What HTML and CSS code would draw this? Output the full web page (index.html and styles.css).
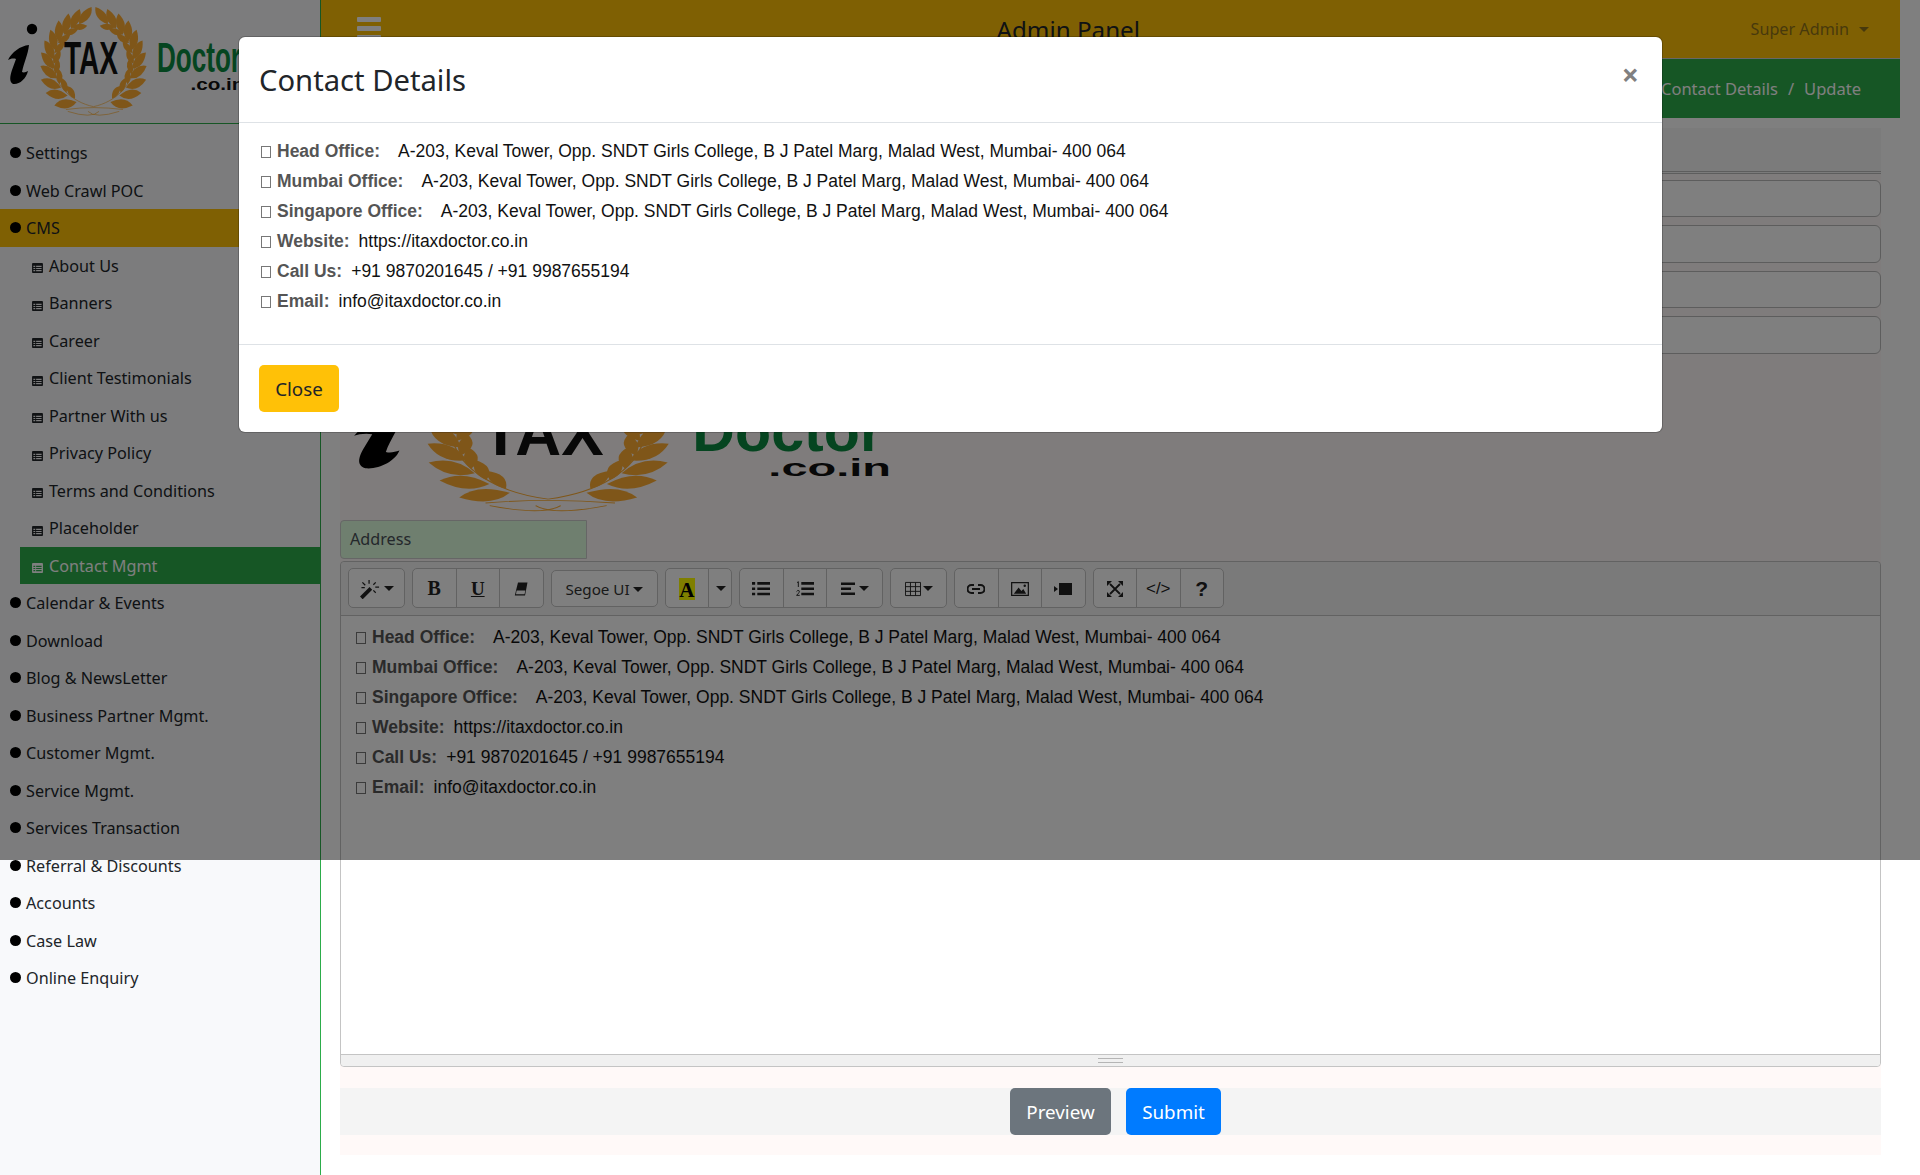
FILE: index.html
```html
<!DOCTYPE html>
<html lang="en">
<head>
<meta charset="utf-8">
<title>Admin Panel</title>
<link rel="stylesheet" href="styles.css">
</head>
<body>
<svg class="defs" width="0" height="0" aria-hidden="true">
  <defs>
    <path id="lf-o" d="M7 -42 Q6 -55 -10 -57 Q-9 -44 7 -42Z"/>
    <path id="lf-i" d="M8 -43 Q-1 -46 -8 -38 Q2 -33 8 -43Z"/>
    <g id="half">
      <use href="#lf-o" transform="rotate(12)"/>
      <use href="#lf-o" transform="rotate(25)"/>
      <use href="#lf-o" transform="rotate(38)"/>
      <use href="#lf-o" transform="rotate(51)"/>
      <use href="#lf-o" transform="rotate(64)"/>
      <use href="#lf-o" transform="rotate(77)"/>
      <use href="#lf-o" transform="rotate(90)"/>
      <use href="#lf-o" transform="rotate(104)"/>
      <use href="#lf-o" transform="rotate(118) scale(1.04)"/>
      <use href="#lf-o" transform="rotate(132) scale(1.06)"/>
      <use href="#lf-o" transform="rotate(147) scale(1.08)"/>
      <use href="#lf-i" transform="rotate(22)"/>
      <use href="#lf-i" transform="rotate(37)"/>
      <use href="#lf-i" transform="rotate(52)"/>
      <use href="#lf-i" transform="rotate(67)"/>
      <use href="#lf-i" transform="rotate(82)"/>
      <use href="#lf-i" transform="rotate(97)"/>
      <use href="#lf-i" transform="rotate(112)"/>
      <use href="#lf-i" transform="rotate(127)"/>
      <use href="#lf-i" transform="rotate(142)"/>
      <path class="stem" d="M0 47 C24 42 42 25 46 0 C46 -15 36 -34 14 -44" />
    </g>
    <g id="logo">
      <circle cx="32" cy="29" r="5.200"/>
      <path d="M8 60 C12 52 20 46 29 45 C28 55 24 62 22 72 C24 73 26 72 28 71 C26 79 19 85 13 84 C9 82 10 76 12 70 L16 59 C13 58 10 59 8 60Z"/>
      <g class="wreath" transform="translate(93.500 62) scale(.92 .95)">
        <use href="#half"/>
        <use href="#half" transform="scale(-1 1)"/>
        <path class="stem" d="M-30 50 Q0 46 32 50 M-28 52 Q-2 60 6 52 M28 52 Q2 60 -6 52"/>
      </g>
      <text class="lg-tax" x="64" y="74" textLength="54" lengthAdjust="spacingAndGlyphs">TAX</text>
      <text class="lg-doc" x="157" y="71.500" textLength="84" lengthAdjust="spacingAndGlyphs">Doctor</text>
      <text class="lg-co" x="190.500" y="90" textLength="54" lengthAdjust="spacingAndGlyphs">.co.in</text>
    </g>
    <symbol id="ico-list" viewBox="0 0 12 11"><path fill="currentColor" fill-rule="evenodd" d="M0 1.200C0 .5.5 0 1.200 0h9.600C11.500 0 12 .5 12 1.200v8.600c0 .7-.5 1.200-1.200 1.200H1.200C.5 11 0 10.500 0 9.800ZM1.500 3v1.400h2V3Zm3 0v1.400h6V3Zm-3 2.400v1.300h2V5.400Zm3 0v1.300h6V5.400Zm-3 2.300v1.500h2V7.700Zm3 0v1.500h6V7.700Z"/></symbol>
  </defs>
</svg>

<div class="app">
  <aside class="sidebar">
    <div class="side-logo">
      <svg class="logo-small" viewBox="0 0 250 122" role="img" aria-label="iTax Doctor"><use href="#logo"/></svg>
    </div>
    <nav class="menu">
      <a class="item"><i class="dot"></i><span class="lbl">Settings</span></a>
      <a class="item"><i class="dot"></i><span class="lbl">Web Crawl POC</span></a>
      <a class="item item-open"><i class="dot"></i><span class="lbl">CMS</span></a>
      <a class="sub"><svg class="sub-ico"><use href="#ico-list"/></svg><span class="lbl">About Us</span></a>
      <a class="sub"><svg class="sub-ico"><use href="#ico-list"/></svg><span class="lbl">Banners</span></a>
      <a class="sub"><svg class="sub-ico"><use href="#ico-list"/></svg><span class="lbl">Career</span></a>
      <a class="sub"><svg class="sub-ico"><use href="#ico-list"/></svg><span class="lbl">Client Testimonials</span></a>
      <a class="sub"><svg class="sub-ico"><use href="#ico-list"/></svg><span class="lbl">Partner With us</span></a>
      <a class="sub"><svg class="sub-ico"><use href="#ico-list"/></svg><span class="lbl">Privacy Policy</span></a>
      <a class="sub"><svg class="sub-ico"><use href="#ico-list"/></svg><span class="lbl">Terms and Conditions</span></a>
      <a class="sub"><svg class="sub-ico"><use href="#ico-list"/></svg><span class="lbl">Placeholder</span></a>
      <a class="sub sub-active"><svg class="sub-ico"><use href="#ico-list"/></svg><span class="lbl">Contact Mgmt</span></a>
      <a class="item"><i class="dot"></i><span class="lbl">Calendar &amp; Events</span></a>
      <a class="item"><i class="dot"></i><span class="lbl">Download</span></a>
      <a class="item"><i class="dot"></i><span class="lbl">Blog &amp; NewsLetter</span></a>
      <a class="item"><i class="dot"></i><span class="lbl">Business Partner Mgmt.</span></a>
      <a class="item"><i class="dot"></i><span class="lbl">Customer Mgmt.</span></a>
      <a class="item"><i class="dot"></i><span class="lbl">Service Mgmt.</span></a>
      <a class="item"><i class="dot"></i><span class="lbl">Services Transaction</span></a>
      <a class="item"><i class="dot"></i><span class="lbl">Referral &amp; Discounts</span></a>
      <a class="item"><i class="dot"></i><span class="lbl">Accounts</span></a>
      <a class="item"><i class="dot"></i><span class="lbl">Case Law</span></a>
      <a class="item"><i class="dot"></i><span class="lbl">Online Enquiry</span></a>
    </nav>
  </aside>

  <main class="main">
    <header class="topbar">
      <div class="burger"><span></span><span></span><span></span></div>
      <div class="top-title">Admin Panel</div>
      <div class="top-user">Super Admin<i class="caret caret-user"></i></div>
    </header>
    <div class="crumbs"><span>Contact Details</span><span class="crumb-sep">/</span><span>Update</span></div>

    <section class="panel">
      <div class="panel-head"></div>
      <div class="field f1"></div>
      <div class="field f2"></div>
      <div class="field f3"></div>
      <div class="field f4"></div>
      <svg class="logo-big" viewBox="1.800 0 248 122" preserveAspectRatio="none" role="img" aria-label="iTax Doctor"><use href="#logo"/></svg>
      <div class="addr-label">Address</div>

      <div class="editor">
        <div class="toolbar">
          <div class="grp">
            <button class="tb tb-wide"><svg class="ic ic-wand" viewBox="0 0 24 21"><path d="M1 18.500 11 8.500l2.800 2.800-10 10Z" fill="#222"/><path d="M10.500 1v4M3.500 3.500 6.500 6.500M17.500 3.500l-2.500 2.500M15 12l2.500 2.500M17 8.500h4M6 9H2.500" stroke="#222" stroke-width="1.300" fill="none"/></svg><i class="caret"></i></button>
          </div>
          <div class="grp">
            <button class="tb tb-txt tb-b">B</button>
            <button class="tb tb-txt tb-u">U</button>
            <button class="tb"><svg class="ic" viewBox="0 0 16 16"><path d="M5 1.500h9.500L12 14.500H1.800Z" fill="#222"/><path d="M3.600 9.500h8.800l-.9 3.800H3Z" fill="#fff"/></svg></button>
          </div>
          <div class="grp">
            <button class="tb tb-font">Segoe UI<i class="caret"></i></button>
          </div>
          <div class="grp">
            <button class="tb"><span class="hl">A</span></button>
            <button class="tb tb-narrow"><i class="caret"></i></button>
          </div>
          <div class="grp">
            <button class="tb"><svg class="ic" viewBox="0 0 17 15"><path d="M0 1h3v2.500H0ZM0 6h3v2.500H0ZM0 11h3v2.500H0ZM5 1h12v2.500H5ZM5 6h12v2.500H5ZM5 11h12v2.500H5Z" fill="#222"/></svg></button>
            <button class="tb"><svg class="ic" viewBox="0 0 17 15"><path d="M5 1h12v2.500H5ZM5 6h12v2.500H5ZM5 11h12v2.500H5Z" fill="#222"/><path d="M1 1.500 2.200.6v5" stroke="#222" fill="none" stroke-width=".9"/><path d="M.5 10q1-1.800 2.500-.8 1 1-2.500 4.300h3" stroke="#222" fill="none" stroke-width=".9"/></svg></button>
            <button class="tb tb-wide"><svg class="ic ic-s" viewBox="0 0 16 15"><path d="M0 1h14v2.500H0ZM0 6h10v2.500H0ZM0 11h14v2.500H0Z" fill="#222"/></svg><i class="caret"></i></button>
          </div>
          <div class="grp">
            <button class="tb tb-wide"><svg class="ic ic-s" viewBox="0 0 17 15"><path d="M.5.500h16v14H.5ZM.5 5h16M.5 10h16M5.800.500v14M11.200.500v14" fill="none" stroke="#222"/></svg><i class="caret"></i></button>
          </div>
          <div class="grp">
            <button class="tb"><svg class="ic" viewBox="0 0 18 12"><path d="M7 2H4.500a4 4 0 0 0 0 8H7M11 2h2.500a4 4 0 0 1 0 8H11M5 6h8" fill="none" stroke="#222" stroke-width="2"/></svg></button>
            <button class="tb"><svg class="ic" viewBox="0 0 19 15"><path d="M.7.700h17.600v13.600H.7Z" fill="none" stroke="#222" stroke-width="1.300"/><path d="M3 12.500 8 6l3 3.500 2-2 3 5Z" fill="#222"/><circle cx="14.500" cy="4" r="1.300" fill="#222"/></svg></button>
            <button class="tb"><svg class="ic" viewBox="0 0 18 13"><path d="M5 .500h13v12H5ZM0 3.500l4 3-4 3Z" fill="#222"/></svg></button>
          </div>
          <div class="grp">
            <button class="tb"><svg class="ic" viewBox="0 0 16 16"><path d="M3 3l10 10M13 3 3 13" stroke="#222" stroke-width="1.800"/><path d="M0 0h5L0 5ZM16 0h-5l5 5ZM0 16h5l-5-5ZM16 16h-5l5-5Z" fill="#222"/></svg></button>
            <button class="tb tb-txt tb-code">&lt;/&gt;</button>
            <button class="tb tb-txt tb-help">?</button>
          </div>
        </div>
        <div class="editable">
          <p class="ln"><i class="tofu"></i><b class="lb lb-l">Head Office:</b>A-203, Keval Tower, Opp. SNDT Girls College, B J Patel Marg, Malad West, Mumbai- 400 064</p>
          <p class="ln"><i class="tofu"></i><b class="lb lb-l">Mumbai Office:</b>A-203, Keval Tower, Opp. SNDT Girls College, B J Patel Marg, Malad West, Mumbai- 400 064</p>
          <p class="ln"><i class="tofu"></i><b class="lb lb-l">Singapore Office:</b>A-203, Keval Tower, Opp. SNDT Girls College, B J Patel Marg, Malad West, Mumbai- 400 064</p>
          <p class="ln"><i class="tofu"></i><b class="lb">Website:</b>https://itaxdoctor.co.in</p>
          <p class="ln"><i class="tofu"></i><b class="lb">Call Us:</b>+91 9870201645 / +91 9987655194</p>
          <p class="ln"><i class="tofu"></i><b class="lb">Email:</b>info@itaxdoctor.co.in</p>
        </div>
        <div class="statusbar"><div class="grip"></div></div>
      </div>

      <div class="actions">
        <button class="btn btn-grey">Preview</button>
        <button class="btn btn-blue">Submit</button>
      </div>
    </section>
  </main>
</div>

<div class="backdrop"></div>
<div class="modal">
  <div class="modal-head">
    <h5 class="modal-title">Contact Details</h5>
    <span class="modal-x">×</span>
  </div>
  <div class="modal-body">
    <p class="ln"><i class="tofu"></i><b class="lb lb-l">Head Office:</b>A-203, Keval Tower, Opp. SNDT Girls College, B J Patel Marg, Malad West, Mumbai- 400 064</p>
    <p class="ln"><i class="tofu"></i><b class="lb lb-l">Mumbai Office:</b>A-203, Keval Tower, Opp. SNDT Girls College, B J Patel Marg, Malad West, Mumbai- 400 064</p>
    <p class="ln"><i class="tofu"></i><b class="lb lb-l">Singapore Office:</b>A-203, Keval Tower, Opp. SNDT Girls College, B J Patel Marg, Malad West, Mumbai- 400 064</p>
    <p class="ln"><i class="tofu"></i><b class="lb">Website:</b>https://itaxdoctor.co.in</p>
    <p class="ln"><i class="tofu"></i><b class="lb">Call Us:</b>+91 9870201645 / +91 9987655194</p>
    <p class="ln"><i class="tofu"></i><b class="lb">Email:</b>info@itaxdoctor.co.in</p>
  </div>
  <div class="modal-foot">
    <button class="btn btn-yellow">Close</button>
  </div>
</div>
</body>
</html>
```

FILE: styles.css
```css
* { box-sizing: border-box; }
html, body { margin: 0; padding: 0; }
body {
  position: relative;
  width: 1920px;
  height: 1175px;
  overflow: hidden;
  background: #fff;
  color: #212529;
  font-family: "Noto Sans", "Open Sans", sans-serif;
  font-size: 16px;
}
.defs { position: absolute; }
.app { display: flex; height: 1175px; padding-right: 20px; }

/* sidebar */
.sidebar {
  width: 321px;
  flex: none;
  background: #f8f9fb;
  border-right: 1px solid #2cac4a;
}
.side-logo { height: 124px; border-bottom: 1px solid #2cac4a; overflow: hidden; }
.logo-small { display: block; width: 250px; height: 122px; }
#logo { fill: #000; }
.wreath { fill: #ffad33; }
.stem { fill: none; stroke: #ffad33; stroke-width: .7; }
.lg-tax { font: 700 46px "Liberation Sans", sans-serif; fill: #111; }
.lg-doc { font: 700 42px "Liberation Sans", sans-serif; fill: #0b8a40; }
.lg-co { font: 700 17px "Liberation Sans", sans-serif; fill: #111; }
.menu { padding-top: 10px; }
.item, .sub {
  display: flex;
  align-items: center;
  height: 37.500px;
  font-size: 16.200px;
  color: #212529;
}
.lbl { padding-top: 1px; }
.item { padding-left: 10px; }
.dot {
  width: 11px;
  height: 11px;
  border-radius: 50%;
  background: #000;
  margin-right: 5px;
  flex: none;
}
.item-open { background: #ffc107; }
.sub { margin-left: 20px; padding-left: 12px; }
.sub-ico { width: 11px; height: 10px; margin: 6px 6px 0 0; flex: none; color: #212529; }
.sub-active { background: #2cac4a; color: #fff; }
.sub-active .sub-ico { color: #fff; }

/* main */
.main { flex: 1; min-width: 0; }
.topbar {
  height: 59px;
  background: #ffc107;
  border-bottom: 1px solid #cfcfcf;
  display: flex;
  align-items: center;
  justify-content: space-between;
  padding: 0 31px 0 36px;
}
.burger { width: 24px; display: flex; flex-direction: column; gap: 4px; margin-top: -1px; }
.burger span { height: 5px; background: #fff; border-radius: 1px; }
.top-title { font-size: 24.200px; line-height: 32px; margin: 2px 0 0 5px; }
.top-user { display: flex; align-items: center; font-size: 16.200px; color: #212529; opacity: .5; }
.caret {
  display: inline-block;
  border-top: 5px solid currentColor;
  border-left: 5px solid transparent;
  border-right: 5px solid transparent;
  margin-left: 2px;
}
.caret-user { margin-left: 10px; }
.crumbs {
  height: 59px;
  background: #2cac4a;
  color: #fff;
  font-size: 16.500px;
  display: flex;
  align-items: center;
  justify-content: flex-end;
  padding-right: 39px;
}
.crumb-sep { margin: 0 10px; }

/* form panel */
.panel {
  margin: 10px 19px 0;
  height: 1027px;
  background: #fff9f8;
}
.panel-head { height: 46px; background: #f6f6f6; border-bottom: 3px double #bbb; }
.field { background: #fff; border: 1px solid #bbb; border-radius: 6px; }
.f1 { height: 37px; margin-top: 6px; }
.f2 { height: 38px; margin-top: 8px; }
.f3 { height: 37px; margin-top: 8px; }
.f4 { height: 38px; margin-top: 8px; }
.logo-big { display: block; width: 563px; height: 166px; }
.addr-label {
  width: 247px;
  height: 39px;
  line-height: 37px;
  padding-left: 9px;
  background: #dffedf;
  border: 1px solid #ccc;
  border-radius: 4px 0 0 4px;
  color: #495057;
  font-size: 16.200px;
}
.editor {
  margin-top: 2px;
  height: 506px;
  border: 1px solid #c4c4c4;
  border-radius: 4px;
  background: #fff;
  display: flex;
  flex-direction: column;
}
.toolbar {
  height: 54px;
  flex: none;
  padding: 6px 0 0 7px;
  display: flex;
  align-items: flex-start;
  gap: 7px;
  background: #f5f5f5;
  border-bottom: 1px solid #c4c4c4;
  border-radius: 4px 4px 0 0;
}
.grp { display: flex; }
.tb {
  width: 44.500px;
  height: 40px;
  padding: 1px 0 0;
  display: flex;
  align-items: center;
  justify-content: center;
  background: #fff;
  border: 1px solid #c4c4c4;
  color: #333;
  font-family: inherit;
  margin-left: -1px;
  border-radius: 0;
}
.tb:first-child { margin-left: 0; border-radius: 5px 0 0 5px; }
.tb:last-child { border-radius: 0 5px 5px 0; }
.tb:only-child { border-radius: 5px; }
.tb-wide { width: 57px; }
.tb-narrow { width: 24px; }
.tb-font { width: 107px; height: 37px; margin-top: 2px; font-size: 15.200px; }
.tb-font .caret { margin-left: 3px; }
.tb .caret { color: #222; }
.ic { width: 18px; height: 16px; display: block; }
.ic-s { width: 16px; }
.ic-wand { width: 23px; height: 20px; }
.tb-txt { color: #222; }
.tb-b { font: 700 20px "Liberation Serif", serif; }
.tb-u { font: 700 19px "Liberation Serif", serif; text-decoration: underline; }
.tb-code { font: 400 17px "Liberation Sans", sans-serif; }
.tb-help { font: 700 21px "Liberation Sans", sans-serif; }
.hl {
  width: 16px;
  height: 22px;
  background: #ffff00;
  color: #000;
  font: 700 21px/24px "Liberation Serif", serif;
  text-align: center;
}
.editable { flex: 1; padding: 6px 0 0 13px; }
.statusbar { height: 12px; flex: none; background: #f0f0f0; border-top: 1px solid #c4c4c4; border-radius: 0 0 4px 4px; display: flex; justify-content: center; }
.grip { width: 25px; height: 5px; margin-top: 3px; border-top: 1px solid #b5b5b5; border-bottom: 1px solid #b5b5b5; }

.ln {
  margin: 0;
  height: 30px;
  line-height: 30px;
  font-family: "Liberation Sans", Arial, sans-serif;
  font-size: 17.500px;
  color: #111;
  white-space: nowrap;
}
.tofu {
  display: inline-block;
  width: 10px;
  height: 12px;
  border: 1px solid #777;
  margin: 0 6px 0 2px;
  vertical-align: -1px;
}
.lb { color: #555; font-weight: 700; margin-right: 9px; }
.lb-l { margin-right: 18px; }

.actions {
  margin-top: 21px;
  height: 47px;
  background: #f4f4f4;
  display: flex;
  justify-content: center;
  gap: 15px;
  padding-left: 10px;
}
.btn {
  height: 47px;
  padding: 0;
  border: 0;
  border-radius: 5px;
  font-family: inherit;
  font-size: 18.800px;
  cursor: pointer;
}
.btn-grey { background: #6c757d; color: #fff; width: 101px; }
.btn-blue { background: #007bff; color: #fff; width: 95px; }
.btn-yellow { background: #ffc107; color: #212529; width: 80px; }

/* modal */
.backdrop {
  position: absolute;
  left: 0;
  top: 0;
  width: 100%;
  height: 860px;
  background: rgba(0, 0, 0, .5);
}
.modal {
  position: absolute;
  left: 239px;
  top: 37px;
  width: 1423px;
  background: #fff;
  border-radius: 6px;
  box-shadow: 0 0 0 1px rgba(0,0,0,.2);
}
.modal-head {
  height: 86px;
  border-bottom: 1px solid #dee2e6;
  padding: 0 20px;
  display: flex;
  align-items: flex-start;
  justify-content: space-between;
}
.modal-title { margin: 25px 0 0; font-size: 29.200px; line-height: 36px; font-weight: 400; color: #212529; }
.modal-x { font-size: 30px; font-weight: 700; line-height: 30px; color: #808080; margin-top: 23px; margin-right: 3px; }
.modal-body { height: 221px; padding: 13px 20px 0; }
.modal-foot { height: 88px; border-top: 1px solid #dee2e6; padding: 20px 20px 0; }
```
